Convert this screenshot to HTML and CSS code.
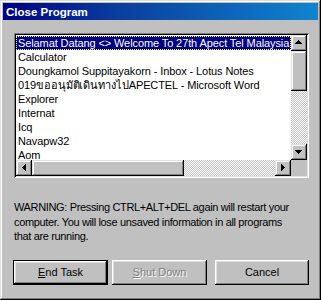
FILE: index.html
```html
<!DOCTYPE html>
<html>
<head>
<meta charset="utf-8">
<title>Close Program</title>
<link rel="stylesheet" href="styles.css">
</head>
<body>
<div class="window">
  <div class="titlebar"><span class="title">Close Program</span></div>
  <div class="content">
    <div class="listframe">
      <div class="listarea">
        <div class="item selected">Selamat Datang &lt;&gt; Welcome To 27th Apect Tel Malaysia</div>
        <div class="item">Calculator</div>
        <div class="item">Doungkamol Suppitayakorn - Inbox - Lotus Notes</div>
        <div class="item">019ขออนุมัติเดินทางไปAPECTEL - Microsoft Word</div>
        <div class="item">Explorer</div>
        <div class="item">Internat</div>
        <div class="item">Icq</div>
        <div class="item">Navapw32</div>
        <div class="item">Aom</div>
      </div>
      <div class="vscroll">
        <div class="sbtn"><svg width="16" height="16" viewBox="0 0 16 16"><path d="M7 5h1v1h1v1h1v1h1v1H4V8h1V7h1V6h1z" fill="#000"/></svg></div>
        <div class="vthumb"></div>
        <div class="track"></div>
        <div class="sbtn"><svg width="16" height="16" viewBox="0 0 16 16"><path d="M4 6h7v1h-1v1H9v1H8v1H7V9H6V8H5V7H4z" fill="#000"/></svg></div>
      </div>
      <div class="hscroll">
        <div class="sbtn"><svg width="16" height="16" viewBox="0 0 16 16"><path d="M9 4h1v7H9v-1H8V9H7V8H6V7h1V6h1V5h1z" fill="#000"/></svg></div>
        <div class="hthumb"></div>
        <div class="track"></div>
        <div class="sbtn"><svg width="16" height="16" viewBox="0 0 16 16"><path d="M6 4h1v1h1v1h1v1h1v1H9v1H8v1H7v1H6z" fill="#000"/></svg></div>
      </div>
      <div class="corner"></div>
    </div>
    <p class="warning">WARNING: Pressing CTRL+ALT+DEL again will restart your computer. You will lose unsaved information in all programs that are running.</p>
    <div class="buttons">
      <div class="btn default"><span><u>E</u>nd Task</span></div>
      <div class="btn disabled shut"><span><u>S</u>hut Down</span></div>
      <div class="btn cancel"><span>Cancel</span></div>
    </div>
  </div>
</div>
</body>
</html>
```
FILE: styles.css
```css
* { box-sizing: border-box; }
html, body { margin: 0; padding: 0; background: #c0c0c0; }
body { font-family: "Liberation Sans", Arial, sans-serif; font-size: 11px; color: #000; }

.window {
  width: 321px;
  height: 300px;
  padding: 3px;
  background: #c0c0c0;
  box-shadow: inset -1px -1px #000, inset 1px 1px #dfdfdf, inset -2px -2px #808080, inset 2px 2px #fff;
  display: flex;
  flex-direction: column;
}

.titlebar {
  height: 17px;
  background: linear-gradient(to right, #000080 0%, #0a3c9e 35%, #1084d0 100%);
  display: flex;
  align-items: center;
  padding-left: 3px;
}
.title {
  color: #fff;
  font-weight: bold;
  font-size: 11.5px;
}

.content {
  padding: 13px 0 0 11px;
}

.listframe {
  width: 295px;
  height: 145px;
  padding: 2px;
  background: #fff;
  box-shadow: inset 1px 1px #808080, inset -1px -1px #fff, inset 2px 2px #000, inset -2px -2px #dfdfdf;
  display: grid;
  grid-template-columns: 275px 16px;
  grid-template-rows: 125px 16px;
}

.listarea {
  overflow: hidden;
  padding-top: 1px;
  white-space: nowrap;
}
.item {
  height: 14px;
  line-height: 14px;
  padding-left: 2px;
  width: 275px;
  letter-spacing: -0.1px;
}
.item.selected {
  background: #000080;
  color: #fff;
  outline: 1px dotted #ffff80;
  outline-offset: -1px;
}

.vscroll {
  display: flex;
  flex-direction: column;
}
.hscroll {
  display: flex;
}
.sbtn {
  width: 16px;
  height: 16px;
  flex: none;
  background: #c0c0c0;
  box-shadow: inset -1px -1px #000, inset 1px 1px #dfdfdf, inset -2px -2px #808080, inset 2px 2px #fff;
}
.sbtn svg { display: block; }
.vthumb {
  height: 40px;
  flex: none;
  background: #c0c0c0;
  box-shadow: inset -1px -1px #000, inset 1px 1px #dfdfdf, inset -2px -2px #808080, inset 2px 2px #fff;
}
.hthumb {
  width: 152px;
  flex: none;
  background: #c0c0c0;
  box-shadow: inset -1px -1px #000, inset 1px 1px #dfdfdf, inset -2px -2px #808080, inset 2px 2px #fff;
}
.track {
  flex: 1;
  background: repeating-conic-gradient(#c0c0c0 0 25%, #fff 0 50%) 0 0 / 2px 2px;
}
.corner { background: #c0c0c0; }

.warning {
  margin: 22px 0 0 0;
  line-height: 14.5px;
  width: 284px;
  letter-spacing: -0.35px;
}

.buttons {
  display: flex;
  margin-top: 16px;
  margin-left: -1px;
}
.btn {
  height: 25px;
  width: 95px;
  background: #c0c0c0;
  display: flex;
  align-items: center;
  justify-content: center;
  box-shadow: inset -1px -1px #000, inset 1px 1px #fff, inset -2px -2px #808080, inset 2px 2px #dfdfdf;
}
.btn.default {
  border: 1px solid #000;
}
.btn.shut { margin-left: 4px; }
.btn.cancel { margin-left: 8px; width: 94px; }
.btn.disabled { color: #808080; text-shadow: 1px 1px 0 #fff; }
```
